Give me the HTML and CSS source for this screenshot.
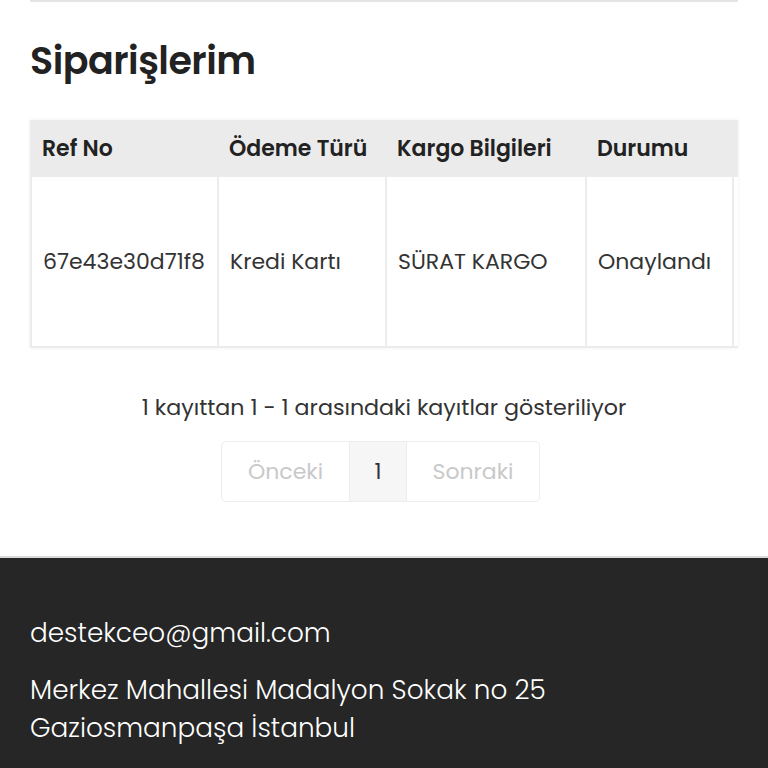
FILE: index.html
```html
<!DOCTYPE html>
<html lang="tr">
<head>
<meta charset="UTF-8">
<meta name="viewport" content="width=device-width, initial-scale=1.0">
<title>Siparişlerim</title>
<link rel="stylesheet" href="styles.css">
</head>
<body>
<div class="page">
    <div class="top-rule"></div>
    <h1 class="page-title">Siparişlerim</h1>

    <!-- Orders table -->
    <div class="table-wrap">
        <table class="orders">
            <thead>
                <tr>
                    <th class="col-ref">Ref No</th>
                    <th class="col-pay">Ödeme Türü</th>
                    <th class="col-cargo">Kargo Bilgileri</th>
                    <th class="col-status">Durumu</th>
                    <th class="col-extra"></th>
                </tr>
            </thead>
            <tbody>
                <tr>
                    <td>67e43e30d71f8</td>
                    <td>Kredi Kartı</td>
                    <td>SÜRAT KARGO</td>
                    <td>Onaylandı</td>
                    <td></td>
                </tr>
            </tbody>
        </table>
    </div>

    <div class="table-info">1 kayıttan 1 - 1 arasındaki kayıtlar gösteriliyor</div>
    <div class="pager">
        <span class="pager-item disabled prev">Önceki</span>
        <span class="pager-item current">1</span>
        <span class="pager-item disabled next">Sonraki</span>
    </div>
</div>

<footer class="site-footer">
    <div class="footer-mail">destekceo@gmail.com</div>
    <div class="footer-address">Merkez Mahallesi Madalyon Sokak no 25<br>Gaziosmanpaşa İstanbul</div>
</footer>
</body>
</html>
```

FILE: styles.css
```css
body {
    margin: 0;
    font-family: Poppins, "DejaVu Sans", sans-serif;
    color: #2b2b2b;
    background-color: #fff;
    overflow: hidden;
}
.page {
    padding: 0 30px;
}
.top-rule {
    border-top: 2px solid #e4e4e4;
}
.page-title {
    margin: 0;
    padding: 37px 0 35px;
    font-size: 38px;
    line-height: 44px;
    font-weight: 600;
    color: #222;
    letter-spacing: -0.5px;
}
.table-wrap {
    overflow: hidden;
    box-shadow: 0 0 3px rgba(0, 0, 0, 0.08);
    background-color: #ebebeb;
    margin-top: 2px;
}
.orders {
    border-collapse: collapse;
    table-layout: fixed;
    width: 800px;
    font-size: 22px;
}
.orders th {
    height: 57px;
    padding: 0 11px;
    text-align: left;
    font-weight: 600;
    color: #222;
    background-color: #ebebeb;
    white-space: nowrap;
}
.orders td {
    height: 169px;
    padding: 0 11px;
    background-color: #fff;
    border: 2px solid #ececec;
    border-top: 0;
    white-space: nowrap;
    color: #333;
}
.col-ref { width: 165px; }
.col-pay { width: 146px; }
.col-cargo { width: 178px; }
.col-status { width: 125px; }
.col-extra { width: 100px; }
.table-info {
    margin-top: 45px;
    text-align: center;
    font-size: 22.2px;
    line-height: 30px;
    color: #333;
}
.pager {
    display: flex;
    justify-content: center;
    margin-top: 18px;
    padding-right: 7px;
}
.pager-item {
    display: flex;
    align-items: center;
    justify-content: center;
    height: 59px;
    font-size: 22px;
    border: 1px solid #ededed;
    border-left: 0;
}
.pager-item.prev {
    width: 127px;
    border-left: 1px solid #ededed;
    border-radius: 5px 0 0 5px;
}
.pager-item.current {
    width: 56px;
    background-color: #f6f6f6;
    color: #333;
}
.pager-item.next {
    width: 132px;
    border-radius: 0 5px 5px 0;
}
.pager-item.disabled {
    color: #c9c9c9;
}
.site-footer {
    margin-top: 54px;
    border-top: 2px solid #d9d9d9;
    background-color: #262626;
    color: #fff;
    padding: 56px 30px 40px;
    font-size: 26.3px;
    font-weight: 300;
    line-height: 38px;
}
.footer-address {
    margin-top: 19px;
}
```
